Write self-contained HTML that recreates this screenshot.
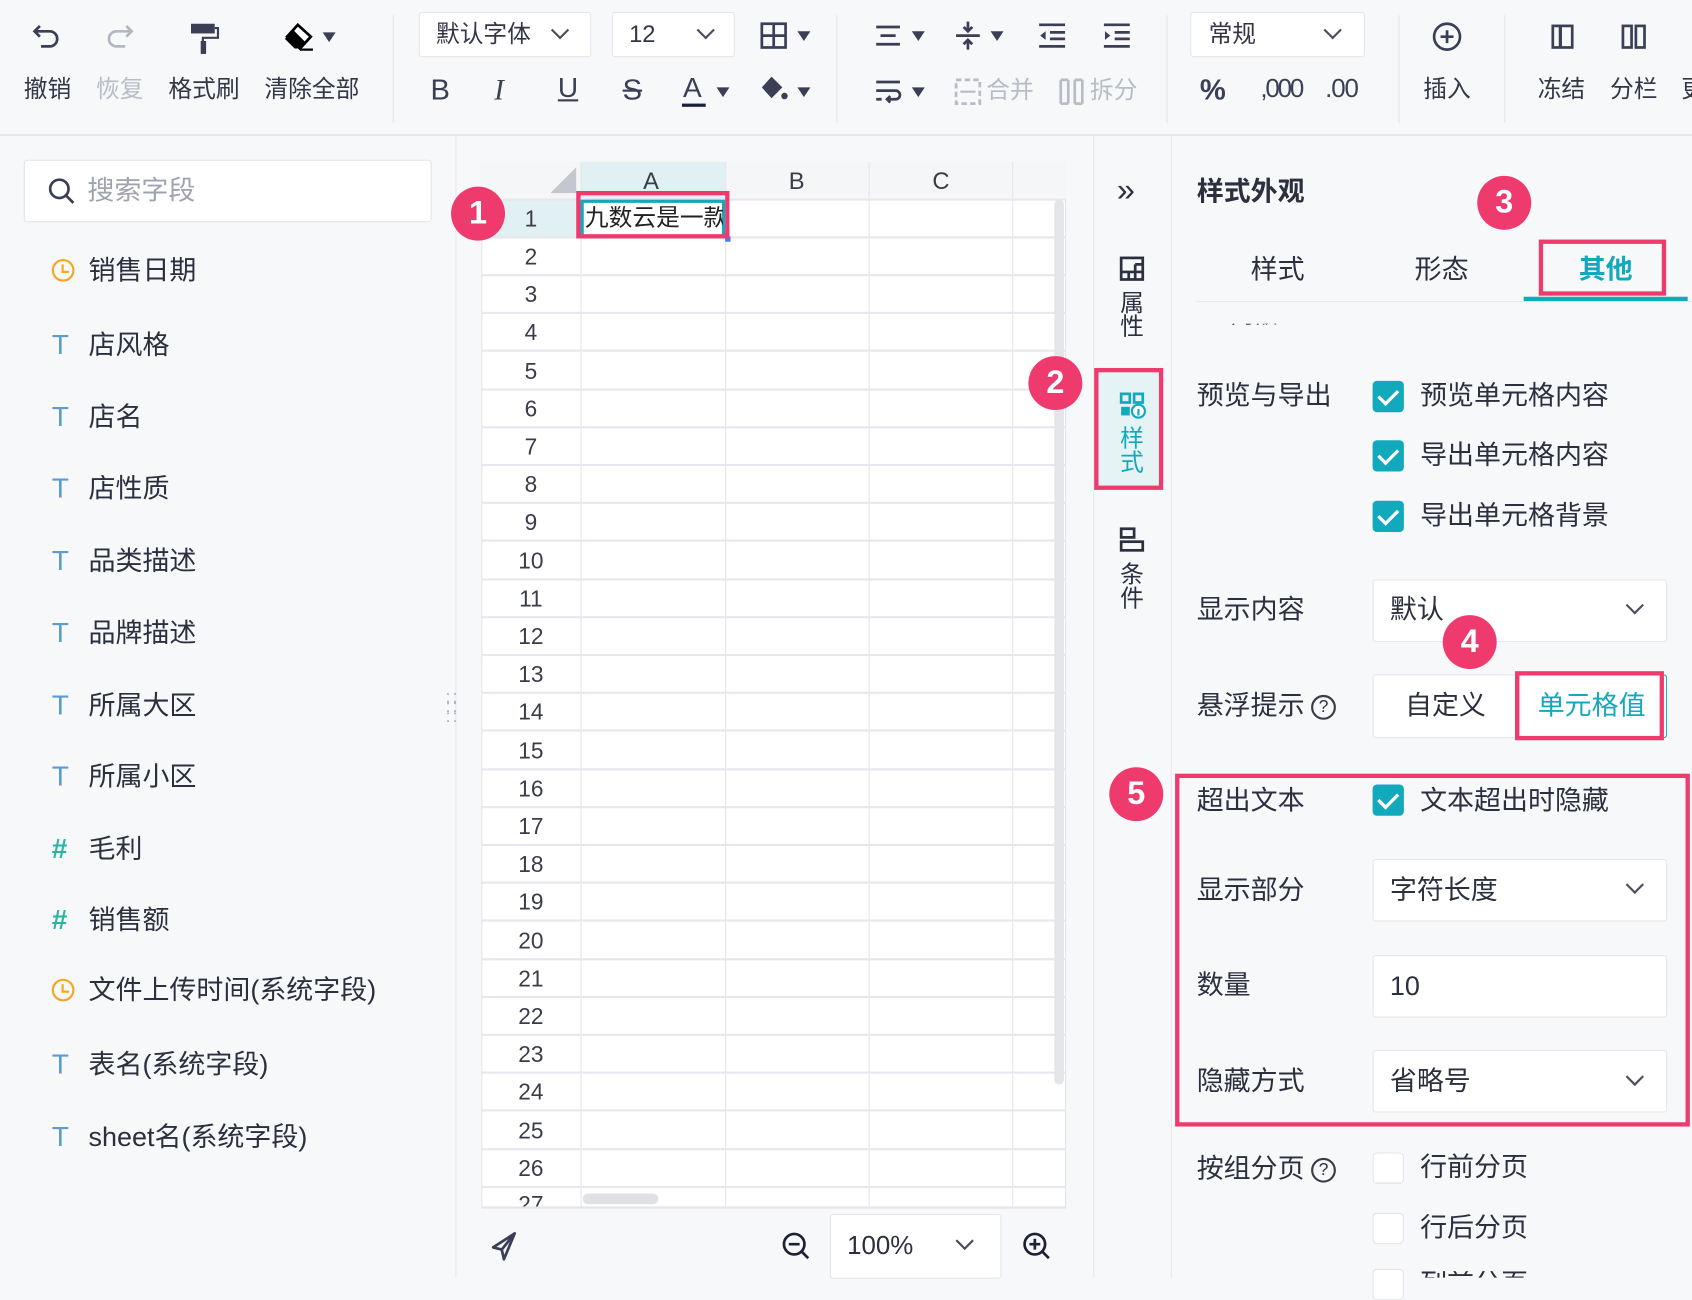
<!DOCTYPE html>
<html><head><meta charset="utf-8">
<style>
*{margin:0;padding:0;box-sizing:border-box}
html,body{width:1692px;height:1278px;overflow:hidden;background:#f7f8fa}
#s{position:absolute;left:0;top:0;width:1568px;height:1184px;transform:scale(1.07908);transform-origin:0 0;font-family:"Liberation Sans","Noto Sans CJK SC",sans-serif;color:#2b2f3e;background:#f7f8fa}
.a{position:absolute}
.t{position:absolute;white-space:nowrap;line-height:1}
.tb{font-size:22px;color:#333645}
.gray{color:#b8bcc6}
.sel{position:absolute;background:#fff;border:1px solid #e4e6ec;border-radius:3px}
.chev{position:absolute;width:12px;height:12px;border-right:2px solid #4a4e5c;border-bottom:2px solid #4a4e5c;transform:rotate(45deg)}
.tri{position:absolute;width:0;height:0;border-left:6px solid transparent;border-right:6px solid transparent;border-top:9px solid #3a3f55}
.li{position:absolute;left:48px;font-size:25px;line-height:1;white-space:nowrap}
.li .ic{display:inline-block;width:34px;color:#4a90e2;font-size:26px}
.li .T{color:#5b9bd5}
.li .H{color:#2bb3a3;font-weight:bold}
.clock{display:inline-block;width:21px;height:21px;border:2.5px solid #f5a623;border-radius:50%;position:relative;vertical-align:-2px;margin-right:13px}
.clock:after{content:"";position:absolute;left:7px;top:3px;width:5px;height:6px;border-left:2px solid #f5a623;border-bottom:2px solid #f5a623}
.rn{position:absolute;left:446px;width:92px;text-align:center;font-size:21px;color:#3a3d48;line-height:1}
.hl{position:absolute;left:446px;width:542px;height:2px;background:#e6e8ee}
.vl{position:absolute;top:150px;height:970px;width:1px;background:#e3e5ea}
.lbl{position:absolute;left:1109px;font-size:25px;line-height:1;white-space:nowrap;color:#2b2f3e}
.cb{position:absolute;left:1272px;width:29px;height:29px;border-radius:4px;background:#13a9bd}
.cb:after{content:"";position:absolute;left:9px;top:4px;width:8px;height:15px;border-right:3.5px solid #fff;border-bottom:3.5px solid #fff;transform:rotate(45deg)}
.cbe{position:absolute;left:1272px;width:29px;height:29px;border-radius:4px;background:#fff;border:1px solid #e2e4ea}
.ct{position:absolute;left:1316px;font-size:25px;line-height:1;white-space:nowrap}
.circ{position:absolute;width:50px;height:50px;border-radius:50%;background:#ef3a6e;color:#fff;font-size:30px;font-weight:bold;text-align:center;line-height:50px}
.pink{position:absolute;border:4px solid #ef3a6e}
.q{display:inline-block;width:23px;height:23px;border:2px solid #3a3d48;border-radius:50%;font-size:16px;text-align:center;line-height:19px;vertical-align:2px;margin-left:6px}
</style></head><body><div id="s">

<!-- toolbar -->
<div class="a" style="left:0;top:124px;width:1568px;height:2px;background:#e6e8ee"></div>
<svg class="a" style="left:28px;top:20px" width="32" height="30" viewBox="0 0 32 30"><path d="M9 4 L4 9 L9 14 M4 9 H18 a7 7 0 0 1 0 14 H10" fill="none" stroke="#3a3f55" stroke-width="2.5"/></svg>
<svg class="a" style="left:96px;top:20px" width="32" height="30" viewBox="0 0 32 30"><path d="M21 4 L26 9 L21 14 M26 9 H12 a7 7 0 0 0 0 14 H20" fill="none" stroke="#b3b7c2" stroke-width="2.5"/></svg>
<svg class="a" style="left:174px;top:20px" width="30" height="32" viewBox="0 0 30 32"><rect x="3" y="2" width="22" height="9" fill="#3a3f55"/><path d="M25 6 H28 V15 H14 V18" fill="none" stroke="#3a3f55" stroke-width="2"/><rect x="12" y="18" width="5" height="12" fill="#3a3f55"/></svg>
<svg class="a" style="left:262px;top:20px" width="32" height="30" viewBox="0 0 32 30"><path d="M14 3 L26 14 L16 25 L4 14 Z" fill="#fff" stroke="#000" stroke-width="2.5"/><path d="M4 14 L16 25 L11 25 L2 16 Z M4 14 L10 8 L21 19 L16 25 Z" fill="#000"/><path d="M16 26 H28" stroke="#000" stroke-width="2"/></svg>
<div class="tri" style="left:299px;top:30px"></div>
<div class="t tb" style="left:22px;top:72px">撤销</div>
<div class="t tb gray" style="left:89px;top:72px">恢复</div>
<div class="t tb" style="left:156px;top:72px">格式刷</div>
<div class="t tb" style="left:245px;top:72px">清除全部</div>
<div class="a" style="left:364px;top:14px;width:1px;height:100px;background:#e4e6ec"></div>

<div class="sel" style="left:388px;top:11px;width:160px;height:42px"></div>
<div class="t tb" style="left:404px;top:21px">默认字体</div>
<div class="chev" style="left:513px;top:22px"></div>
<div class="sel" style="left:567px;top:11px;width:114px;height:42px"></div>
<div class="t tb" style="left:583px;top:21px">12</div>
<div class="chev" style="left:648px;top:22px"></div>
<svg class="a" style="left:704px;top:20px" width="26" height="26"><rect x="2" y="2" width="22" height="22" fill="none" stroke="#3a3f55" stroke-width="2.5"/><path d="M13 2V24M2 13H24" stroke="#3a3f55" stroke-width="2.5"/></svg>
<div class="tri" style="left:739px;top:29px"></div>

<div class="t" style="left:399px;top:70px;font-size:27px;color:#3a3f55">B</div>
<div class="t" style="left:458px;top:70px;font-size:27px;color:#3a3f55;font-style:italic;font-family:'Liberation Serif',serif">I</div>
<div class="t" style="left:517px;top:68px;font-size:26px;color:#3a3f55;text-decoration:underline">U</div>
<div class="t" style="left:577px;top:70px;font-size:27px;color:#3a3f55;text-decoration:line-through">S</div>
<div class="t" style="left:633px;top:68px;font-size:26px;color:#3a3f55">A</div>
<div class="a" style="left:632px;top:96px;width:22px;height:3px;background:#1c2040"></div>
<div class="tri" style="left:664px;top:81px"></div>
<svg class="a" style="left:703px;top:68px" width="28" height="30"><path d="M12 3 L22 13 L12 23 L3 13 Z" fill="#3a3f55"/><circle cx="24" cy="21" r="3" fill="#3a3f55"/></svg>
<div class="tri" style="left:739px;top:81px"></div>
<div class="a" style="left:775px;top:14px;width:1px;height:100px;background:#e4e6ec"></div>

<svg class="a" style="left:810px;top:20px" width="26" height="26"><path d="M2 5H24M6 13H20M2 21H24" stroke="#3a3f55" stroke-width="2.5"/></svg>
<div class="tri" style="left:845px;top:29px"></div>
<svg class="a" style="left:884px;top:18px" width="26" height="30"><path d="M2 15H24M13 2V11M9 7L13 11L17 7M13 28V19M9 23L13 19L17 23" fill="none" stroke="#3a3f55" stroke-width="2.5"/></svg>
<div class="tri" style="left:918px;top:29px"></div>
<svg class="a" style="left:961px;top:20px" width="28" height="26"><path d="M2 3H26M12 10H26M12 16H26M2 23H26" stroke="#3a3f55" stroke-width="2.5"/><path d="M8 9L3 13L8 17Z" fill="#3a3f55"/></svg>
<svg class="a" style="left:1021px;top:20px" width="28" height="26"><path d="M2 3H26M12 10H26M12 16H26M2 23H26" stroke="#3a3f55" stroke-width="2.5"/><path d="M3 9L8 13L3 17Z" fill="#3a3f55"/></svg>
<svg class="a" style="left:810px;top:72px" width="26" height="26"><path d="M2 4H24M2 12H20a4 4 0 0 1 0 8H12M15 17L12 20L15 23M2 20H7" fill="none" stroke="#3a3f55" stroke-width="2.5"/></svg>
<div class="tri" style="left:845px;top:81px"></div>
<svg class="a" style="left:884px;top:72px" width="26" height="26"><rect x="2" y="2" width="22" height="22" fill="none" stroke="#b8bcc6" stroke-width="2.5" stroke-dasharray="5 3"/><path d="M6 13H20" stroke="#b8bcc6" stroke-width="2"/></svg>
<div class="t tb gray" style="left:914px;top:73px">合并</div>
<svg class="a" style="left:980px;top:72px" width="26" height="26"><path d="M3 2V24M10 2V24M16 2V24M23 2V24M3 2H10M3 24H10M16 2H23M16 24H23" stroke="#b8bcc6" stroke-width="2.5"/></svg>
<div class="t tb gray" style="left:1010px;top:73px">拆分</div>
<div class="a" style="left:1081px;top:14px;width:1px;height:100px;background:#e4e6ec"></div>

<div class="sel" style="left:1103px;top:11px;width:162px;height:42px"></div>
<div class="t tb" style="left:1120px;top:21px">常规</div>
<div class="chev" style="left:1229px;top:22px"></div>
<div class="t" style="left:1112px;top:70px;font-size:27px;color:#3a3f55;font-weight:bold">%</div>
<div class="t" style="left:1168px;top:71px;font-size:24px;color:#3a3f55;letter-spacing:-2px">,000</div>
<div class="t" style="left:1228px;top:71px;font-size:24px;color:#3a3f55;letter-spacing:-1px">.00</div>
<div class="a" style="left:1296px;top:14px;width:1px;height:100px;background:#e4e6ec"></div>
<svg class="a" style="left:1327px;top:20px" width="28" height="28"><circle cx="14" cy="14" r="12" fill="none" stroke="#3a3f55" stroke-width="2.5"/><path d="M14 8V20M8 14H20" stroke="#3a3f55" stroke-width="2.5"/></svg>
<div class="t tb" style="left:1319px;top:72px">插入</div>
<div class="a" style="left:1394px;top:14px;width:1px;height:100px;background:#e4e6ec"></div>
<svg class="a" style="left:1437px;top:22px" width="22" height="24"><rect x="2" y="2" width="18" height="20" fill="none" stroke="#3a3f55" stroke-width="2.5"/><path d="M9 2V22" stroke="#3a3f55" stroke-width="3"/></svg>
<svg class="a" style="left:1502px;top:22px" width="24" height="24"><rect x="2" y="2" width="8" height="20" fill="none" stroke="#3a3f55" stroke-width="2.5"/><rect x="14" y="2" width="8" height="20" fill="none" stroke="#3a3f55" stroke-width="2.5"/></svg>
<div class="t tb" style="left:1425px;top:72px">冻结</div>
<div class="t tb" style="left:1492px;top:72px">分栏</div>
<div class="t tb" style="left:1558px;top:72px">更</div>

<!-- left panel -->
<div class="a" style="left:422px;top:126px;width:1px;height:1058px;background:#e6e8ee"></div>
<div class="a" style="left:22px;top:148px;width:378px;height:58px;background:#fff;border:1px solid #e2e4ea;border-radius:3px"></div>
<svg class="a" style="left:44px;top:164px" width="26" height="26"><circle cx="11" cy="11" r="8.5" fill="none" stroke="#3a3f55" stroke-width="2.5"/><path d="M17 17L24 24" stroke="#3a3f55" stroke-width="2.5"/></svg>
<div class="t" style="left:81px;top:165px;font-size:25px;color:#9ea3ae">搜索字段</div>
<div class="li" style="top:239px"><span class="clock"></span>销售日期</div>
<div class="li" style="top:306px"><span class="ic T">T</span>店风格</div>
<div class="li" style="top:373px"><span class="ic T">T</span>店名</div>
<div class="li" style="top:439px"><span class="ic T">T</span>店性质</div>
<div class="li" style="top:506px"><span class="ic T">T</span>品类描述</div>
<div class="li" style="top:573px"><span class="ic T">T</span>品牌描述</div>
<div class="li" style="top:640px"><span class="ic T">T</span>所属大区</div>
<div class="li" style="top:706px"><span class="ic T">T</span>所属小区</div>
<div class="li" style="top:773px"><span class="ic H">#</span>毛利</div>
<div class="li" style="top:839px"><span class="ic H">#</span>销售额</div>
<div class="li" style="top:906px"><span class="clock"></span>文件上传时间(系统字段)</div>
<div class="li" style="top:973px"><span class="ic T">T</span>表名(系统字段)</div>
<div class="li" style="top:1040px"><span class="ic T">T</span>sheet名(系统字段)</div>
<div class="t" style="left:413px;top:642px;font-size:16px;color:#aab;letter-spacing:2px;line-height:9px;width:20px;white-space:normal">::<br>::<br>::</div>

<!-- grid -->
<div class="a" style="left:446px;top:150px;width:542px;height:970px;background:#fff;border:1px solid #e3e5ea"></div>
<div class="a" style="left:446px;top:150px;width:542px;height:35px;background:#f5f6f8"></div>
<div class="a" style="left:538px;top:150px;width:134px;height:35px;background:#e0f0f3"></div>
<div class="a" style="left:446px;top:185px;width:92px;height:35px;background:#e0f0f3"></div>
<div class="a" style="left:510px;top:155px;width:0;height:0;border-left:24px solid transparent;border-bottom:24px solid #c4c7cf"></div>
<div class="vl" style="left:538px"></div><div class="vl" style="left:672px"></div><div class="vl" style="left:805px"></div><div class="vl" style="left:938px"></div>
<div class="t" style="left:596px;top:157px;font-size:22px;color:#3a3d48">A</div>
<div class="t" style="left:731px;top:157px;font-size:22px;color:#3a3d48">B</div>
<div class="t" style="left:864px;top:157px;font-size:22px;color:#3a3d48">C</div>
<div class="hl" style="top:184px"></div><div class="hl" style="top:219px"></div><div class="hl" style="top:254px"></div><div class="hl" style="top:289px"></div><div class="hl" style="top:324px"></div><div class="hl" style="top:360px"></div><div class="hl" style="top:395px"></div><div class="hl" style="top:430px"></div><div class="hl" style="top:465px"></div><div class="hl" style="top:500px"></div><div class="hl" style="top:536px"></div><div class="hl" style="top:571px"></div><div class="hl" style="top:606px"></div><div class="hl" style="top:641px"></div><div class="hl" style="top:676px"></div><div class="hl" style="top:712px"></div><div class="hl" style="top:747px"></div><div class="hl" style="top:782px"></div><div class="hl" style="top:817px"></div><div class="hl" style="top:852px"></div><div class="hl" style="top:888px"></div><div class="hl" style="top:923px"></div><div class="hl" style="top:958px"></div><div class="hl" style="top:993px"></div><div class="hl" style="top:1028px"></div><div class="hl" style="top:1064px"></div><div class="hl" style="top:1099px"></div>
<div class="rn" style="top:193px">1</div><div class="rn" style="top:228px">2</div><div class="rn" style="top:263px">3</div><div class="rn" style="top:298px">4</div><div class="rn" style="top:334px">5</div><div class="rn" style="top:369px">6</div><div class="rn" style="top:404px">7</div><div class="rn" style="top:439px">8</div><div class="rn" style="top:474px">9</div><div class="rn" style="top:510px">10</div><div class="rn" style="top:545px">11</div><div class="rn" style="top:580px">12</div><div class="rn" style="top:615px">13</div><div class="rn" style="top:650px">14</div><div class="rn" style="top:686px">15</div><div class="rn" style="top:721px">16</div><div class="rn" style="top:756px">17</div><div class="rn" style="top:791px">18</div><div class="rn" style="top:826px">19</div><div class="rn" style="top:862px">20</div><div class="rn" style="top:897px">21</div><div class="rn" style="top:932px">22</div><div class="rn" style="top:967px">23</div><div class="rn" style="top:1002px">24</div><div class="rn" style="top:1038px">25</div><div class="rn" style="top:1073px">26</div><div class="rn" style="top:1106px;height:13px;overflow:hidden">27</div>
<div class="a" style="left:538px;top:185px;width:134px;height:36px;border:3px solid #13a9bd;background:#fff"></div>
<div class="a" style="left:672px;top:219px;width:5px;height:5px;background:#3b82f6"></div>
<div class="t" style="left:542px;top:191px;font-size:22px;width:128px;overflow:hidden;color:#222">九数云是一款</div>
<div class="pink" style="left:534px;top:177px;width:142px;height:44px"></div>
<div class="a" style="left:977px;top:185px;width:9px;height:820px;border-radius:5px;background:#e4e5e9"></div>
<div class="a" style="left:540px;top:1106px;width:70px;height:10px;border-radius:5px;background:#e0e1e5"></div>
<div class="a" style="left:446px;top:1118px;width:542px;height:2px;background:#e3e5ea"></div>

<!-- bottom bar -->
<svg class="a" style="left:453px;top:1140px" width="28" height="30"><path d="M24 3 L4 16 L12 18 L14 27 Z M12 18 L24 3" fill="none" stroke="#3a3f55" stroke-width="2.5" stroke-linejoin="round"/></svg>
<svg class="a" style="left:724px;top:1141px" width="28" height="28"><circle cx="12" cy="12" r="9.5" fill="none" stroke="#1e2133" stroke-width="2.5"/><path d="M7 12H17M19 19L25 25" stroke="#1e2133" stroke-width="2.5"/></svg>
<div class="sel" style="left:769px;top:1125px;width:159px;height:60px"></div>
<div class="t" style="left:785px;top:1143px;font-size:24px;color:#2b2f3e">100%</div>
<div class="chev" style="left:888px;top:1144px"></div>
<svg class="a" style="left:947px;top:1141px" width="28" height="28"><circle cx="12" cy="12" r="9.5" fill="none" stroke="#1e2133" stroke-width="2.5"/><path d="M7 12H17M12 7V17M19 19L25 25" stroke="#1e2133" stroke-width="2.5"/></svg>

<!-- vertical sidebar -->
<div class="a" style="left:1013px;top:126px;width:1px;height:1058px;background:#e6e8ee"></div>
<div class="a" style="left:1085px;top:126px;width:1px;height:1058px;background:#e6e8ee"></div>
<div class="t" style="left:1035px;top:162px;font-size:30px;color:#2b2f3e">»</div>
<svg class="a" style="left:1037px;top:237px" width="24" height="24"><rect x="2" y="2" width="20" height="20" fill="none" stroke="#2b2f3e" stroke-width="2.5"/><path d="M2 15H22M9 15V22M15 8V22M15 8H22" stroke="#2b2f3e" stroke-width="2.5"/></svg>
<div class="t" style="left:1038px;top:270px;font-size:22px;line-height:22px;width:24px;white-space:normal">属性</div>
<div class="a" style="left:1017px;top:344px;width:58px;height:106px;background:#e6f3f5"></div>
<svg class="a" style="left:1037px;top:363px" width="26" height="26"><rect x="2" y="2" width="8" height="8" fill="none" stroke="#13a9bd" stroke-width="2.5"/><rect x="14" y="2" width="8" height="8" fill="none" stroke="#13a9bd" stroke-width="2.5"/><rect x="2" y="14" width="8" height="8" fill="#13a9bd"/><circle cx="18" cy="18" r="6" fill="#fff" stroke="#13a9bd" stroke-width="2"/><path d="M18 16V22" stroke="#13a9bd" stroke-width="2"/></svg>
<div class="t" style="left:1038px;top:396px;font-size:22px;line-height:22px;width:24px;white-space:normal;color:#13a9bd">样式</div>
<div class="pink" style="left:1014px;top:341px;width:64px;height:113px"></div>
<svg class="a" style="left:1037px;top:488px" width="24" height="24"><rect x="2" y="2" width="12" height="8" fill="none" stroke="#2b2f3e" stroke-width="2.5"/><rect x="2" y="14" width="20" height="8" fill="none" stroke="#2b2f3e" stroke-width="2.5"/></svg>
<div class="t" style="left:1038px;top:522px;font-size:22px;line-height:22px;width:24px;white-space:normal">条件</div>

<!-- right panel -->
<div class="t" style="left:1109px;top:166px;font-size:25px;font-weight:bold">样式外观</div>
<div class="t" style="left:1159px;top:238px;font-size:25px">样式</div>
<div class="t" style="left:1311px;top:238px;font-size:25px">形态</div>
<div class="t" style="left:1463px;top:238px;font-size:25px;color:#13a9bd;font-weight:bold">其他</div>
<div class="a" style="left:1109px;top:279px;width:459px;height:1px;background:#e4e6ec"></div>
<div class="a" style="left:1412px;top:275px;width:152px;height:4px;background:#13a9bd"></div>
<div class="pink" style="left:1426px;top:222px;width:118px;height:52px"></div>
<div class="a" style="left:1140px;top:300px;width:60px;height:4px;overflow:hidden"><div class="t" style="top:-19px;font-size:22px;color:#2b2f3e">内嵌</div></div>

<div class="lbl" style="top:355px">预览与导出</div>
<div class="cb" style="top:353px"></div><div class="ct" style="top:355px">预览单元格内容</div>
<div class="cb" style="top:408px"></div><div class="ct" style="top:410px">导出单元格内容</div>
<div class="cb" style="top:464px"></div><div class="ct" style="top:466px">导出单元格背景</div>

<div class="lbl" style="top:553px">显示内容</div>
<div class="sel" style="left:1272px;top:537px;width:273px;height:58px"></div>
<div class="t" style="left:1288px;top:553px;font-size:25px">默认</div>
<div class="chev" style="left:1509px;top:555px"></div>

<div class="lbl" style="top:642px">悬浮提示<span class="q">?</span></div>
<div class="sel" style="left:1272px;top:625px;width:273px;height:59px"></div>
<div class="a" style="left:1408px;top:625px;width:137px;height:59px;border:1px solid #13a9bd;border-left:1px solid #e4e6ec;border-radius:0 3px 3px 0"></div>
<div class="t" style="left:1302px;top:642px;font-size:25px">自定义</div>
<div class="t" style="left:1425px;top:642px;font-size:25px;color:#13a9bd">单元格值</div>
<div class="pink" style="left:1404px;top:622px;width:138px;height:64px"></div>

<div class="lbl" style="top:730px">超出文本</div>
<div class="cb" style="top:727px"></div><div class="ct" style="top:730px">文本超出时隐藏</div>
<div class="lbl" style="top:813px">显示部分</div>
<div class="sel" style="left:1272px;top:796px;width:273px;height:58px"></div>
<div class="t" style="left:1288px;top:813px;font-size:25px">字符长度</div>
<div class="chev" style="left:1509px;top:814px"></div>
<div class="lbl" style="top:901px">数量</div>
<div class="sel" style="left:1272px;top:885px;width:273px;height:58px"></div>
<div class="t" style="left:1288px;top:902px;font-size:25px">10</div>
<div class="lbl" style="top:990px">隐藏方式</div>
<div class="sel" style="left:1272px;top:973px;width:273px;height:58px"></div>
<div class="t" style="left:1288px;top:990px;font-size:25px">省略号</div>
<div class="chev" style="left:1509px;top:992px"></div>
<div class="pink" style="left:1089px;top:717px;width:477px;height:327px"></div>

<div class="lbl" style="top:1071px">按组分页<span class="q">?</span></div>
<div class="cbe" style="top:1068px"></div><div class="ct" style="top:1070px">行前分页</div>
<div class="cbe" style="top:1124px"></div><div class="ct" style="top:1126px">行后分页</div>
<div class="cbe" style="top:1176px"></div>
<div class="a" style="left:1316px;top:1178px;width:110px;height:6px;overflow:hidden"><div class="t" style="top:0;font-size:25px">列前分页</div></div>

<!-- numbered circles -->
<div class="circ" style="left:418px;top:173px">1</div>
<div class="circ" style="left:953px;top:330px">2</div>
<div class="circ" style="left:1369px;top:163px">3</div>
<div class="circ" style="left:1337px;top:570px">4</div>
<div class="circ" style="left:1028px;top:711px">5</div>

</div></body></html>
